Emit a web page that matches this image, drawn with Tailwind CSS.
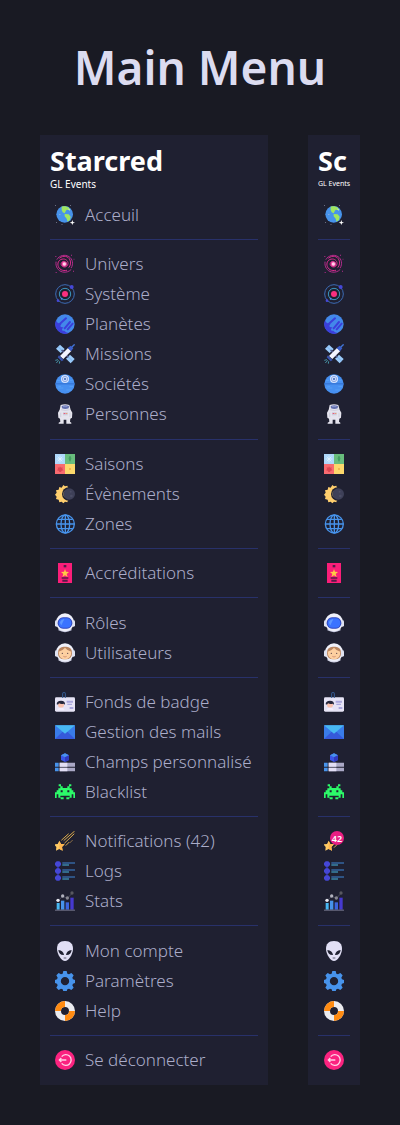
<!DOCTYPE html>
<html lang="fr">
<head>
    <meta charset="UTF-8">
    <meta name="viewport" content="width=device-width, initial-scale=1.0">
    <title>Main Menu</title>
    <script src="https://cdn.jsdelivr.net/npm/@tailwindcss/browser@4"></script>
</head>
<body class="bg-[#191a23] font-['Noto_Sans',sans-serif] text-[#abadc9]">
    <!-- Icon set, drawn on a 60x60 grid -->
    <svg class="hidden" aria-hidden="true">
        <symbol id="earth" viewBox="0 0 60 60">
            <circle cx="29" cy="28" r="25" fill="#4793eb"/>
            <path d="M20 5c7-3 17-1 23 4l-2 6-6-1-3 5-3 6-6-3-3-7z" fill="#a0e65f"/>
            <path d="M29 27l12 1 6 7-2 9-7 6-3-9-6-7z" fill="#a0e65f"/>
            <path d="M41 10l5 4-2 3-4-3z" fill="#c9f59a"/>
            <path d="M52 45l2 6 6 2-6 2-2 5-2-5-6-2 6-2z" fill="#fff"/>
            <path d="M1 1h2v2H1zM46 0h2v2h-2zM3 52h2v2H3zM20 57h2v2h-2zM13 28h3v2h-3z" fill="#b9bbd0"/>
        </symbol>
        <symbol id="galaxy" viewBox="0 0 60 60">
            <g fill="none" stroke="#d92c8e" stroke-width="3" stroke-linecap="round">
                <path d="M27 22c-8 0-11 8-7 13 5 6 15 5 18-2 4-10-4-18-13-18-11 0-18 9-16 19 2 12 14 18 26 15"/>
                <path d="M6 16C13 4 30 0 42 8c11 7 14 22 7 33" stroke="#b52c8e"/>
                <path d="M3 24c-2 14 6 27 20 30 10 2 19-1 25-7" stroke="#b52c8e"/>
                <path d="M14 12c11-9 26-6 31 6 3 8 2 16-3 22"/>
            </g>
            <circle cx="28" cy="30" r="8" fill="#f0429f"/>
            <circle cx="28" cy="30" r="5" fill="#ffd3ea"/>
            <path d="M1 6h3v3H1zM48 2h3v3h-3zM56 14h2v3h-2zM2 54h3v3H2zM54 50h3v3h-3z" fill="#b52c8e"/>
        </symbol>
        <symbol id="system" viewBox="0 0 60 60">
            <circle cx="30" cy="30" r="28" fill="none" stroke="#3c6bb4" stroke-width="3"/>
            <circle cx="30" cy="30" r="17" fill="none" stroke="#3b95bd" stroke-width="3"/>
            <circle cx="30" cy="30" r="9" fill="#fb2f7f"/>
            <circle cx="50" cy="9" r="6" fill="#4547d6"/>
            <circle cx="9" cy="50" r="4" fill="#4547d6"/>
            <circle cx="20" cy="44" r="3" fill="#4793eb"/>
        </symbol>
        <symbol id="planet" viewBox="0 0 60 60">
            <circle cx="30" cy="30" r="29" fill="#4388ea"/>
            <path d="M3 19a29 29 0 0038 38q-9-2-13-7-5 2-7-3 1-4 5-8-7 2-10-2 0-4 4-8-7 3-9-1-6-2-8-9z" fill="#3b3fdb"/>
            <path d="M14 30L33 13M29 43L45 24M38 46L53 29" stroke="#3b3fdb" stroke-width="6" stroke-linecap="round"/>
        </symbol>
        <symbol id="rocket" viewBox="0 0 60 60">
            <path d="M15 2l14 13-12 12L3 14z" fill="#9bcbfa"/>
            <path d="M45 32l14 13-12 13-14-14z" fill="#9bcbfa"/>
            <path d="M9 8l14 13M39 38l14 13" stroke="#6aa4ea" stroke-width="2"/>
            <path d="M20 18l20 22" stroke="#4f578a" stroke-width="5"/>
            <path d="M15 36L39 12l10 9-24 24z" fill="#f3f4ff"/>
            <path d="M38 12l9-7 8 8-7 9z" fill="#3b5ecb"/>
            <path d="M50 10l9-9" stroke="#4174d5" stroke-width="4"/>
            <path d="M12 34l14 14-6 4-12-12z" fill="#3a54ae"/>
            <path d="M9 47l-8 2M11 49l-7 8M14 52l-1 7" stroke="#4793a5" stroke-width="3"/>
        </symbol>
        <symbol id="station" viewBox="0 0 60 60">
            <circle cx="30" cy="30" r="29" fill="#4790f1"/>
            <path d="M1 28h58v3H1z" fill="#326fd1"/>
            <path d="M7 42h18M34 48h15M6 19h9M44 19h9M10 37h8M43 38h12" stroke="#5ba7fa" stroke-width="2"/>
            <circle cx="30" cy="15" r="12" fill="#d8e5ff"/>
            <circle cx="30" cy="15" r="8" fill="none" stroke="#6c8ed5" stroke-width="2"/>
            <path d="M30 5v20M20 15h20" stroke="#87a7e5" stroke-width="1"/>
            <circle cx="30" cy="15" r="3" fill="#4167b8"/>
        </symbol>
        <symbol id="astronaut" viewBox="0 0 60 60">
            <path d="M17 3q13-5 26 0l4 14 5 9-1 15-5 3-1 9 4 3v3H34V47h-8v12H11v-3l5-3-1-9-5-3-1-15 5-9z" fill="#e5e4ee"/>
            <path d="M20 6q11-4 22 0l-1 7q-10 4-20 0z" fill="#6470ae"/>
            <path d="M24 7h13v2H24z" fill="#9ba7dd"/>
            <path d="M18 17q13 5 26 0M17 26v13M45 26v13" fill="none" stroke="#c6c5d6" stroke-width="2"/>
            <path d="M24 25h14v9H24z" fill="#ccccdc"/>
            <path d="M26 27h5v3h-5z" fill="#ef5878"/>
            <path d="M33 27h4v3h-4z" fill="#e9a070"/>
        </symbol>
        <symbol id="seasons" viewBox="0 0 60 60">
            <path d="M0 0h30v30H0z" fill="#aed8fb"/>
            <path d="M30 0h30v30H30z" fill="#68bd7d"/>
            <path d="M0 30h30v30H0z" fill="#f86b70"/>
            <path d="M30 30h30v30H30z" fill="#fcd86c"/>
            <path d="M15 5v20M5 15h20M8 8l14 14M22 8L8 22" stroke="#e9f7ff" stroke-width="2"/>
            <path d="M45 6q7 7 0 15q-7-8 0-15zM45 17v8" fill="#45a464" stroke="#3d8b5c"/>
            <path d="M15 37l3 4 5-1-1 5 3 4-5 1-2 4h-5l-2-4-5-1 3-4-1-5 5 1z" fill="#db4652"/>
            <circle cx="45" cy="45" r="3" fill="#efad46"/>
        </symbol>
        <symbol id="eclipse" viewBox="0 0 60 60">
            <path d="M25 3l5 4 7-2 2 6 6 3v32l-6 3-2 6-7-2-5 5-5-5-7 2-2-8-8-2 2-7-5-6 5-6-2-7 8-2 2-8 7 2z" fill="#ffcf6e"/>
            <path d="M41 11a19 19 0 100 38z" fill="#ffda8b"/>
            <circle cx="41" cy="30" r="20" fill="#1f2031"/>
            <circle cx="43" cy="30" r="17" fill="#3e4058"/>
            <path d="M31 17a17 17 0 000 26 19 19 0 010-26z" fill="#ffda8b"/>
            <circle cx="47" cy="23" r="3" fill="#4b4d65"/>
            <circle cx="49" cy="36" r="4" fill="#4b4d65"/>
        </symbol>
        <symbol id="globe" viewBox="0 0 60 60">
            <g fill="none" stroke="#4793eb" stroke-width="4">
                <circle cx="31" cy="30" r="27"/>
                <ellipse cx="31" cy="30" rx="13" ry="27"/>
                <path d="M31 3v54M4 30h54M9 16h44M9 44h44"/>
            </g>
        </symbol>
        <symbol id="pass" viewBox="0 0 60 60">
            <path d="M9 0h42v60H9z" fill="#fb1e79"/>
            <path d="M26 6h8v7h-8z" fill="#551b48"/>
            <path d="M30 18l3 8 9 1-7 6 3 9-8-5-8 5 3-9-7-6 9-1z" fill="#ffcb45"/>
            <path d="M20 43h20v4H20zM22 50h16v6H22z" fill="#551b48"/>
        </symbol>
        <symbol id="helmet" viewBox="0 0 60 60">
            <path d="M12 42h36l2 10q-20 11-40 0z" fill="#c8cbe1"/>
            <ellipse cx="30" cy="28" rx="27" ry="27" fill="#eff0fa"/>
            <rect x="0" y="22" width="9" height="19" rx="4" fill="#dfe2f1"/>
            <rect x="51" y="22" width="9" height="19" rx="4" fill="#dfe2f1"/>
            <rect x="8" y="13" width="44" height="34" rx="16" fill="#3046bd"/>
            <rect x="11" y="16" width="38" height="28" rx="13" fill="#3b73ff"/>
            <path d="M15 27q3-8 13-9l-9 19q-4-4-4-10z" fill="#5e98ff"/>
        </symbol>
        <symbol id="user" viewBox="0 0 60 60">
            <path d="M12 42h36l2 10q-20 13-40 0z" fill="#d7d8e9"/>
            <circle cx="30" cy="28" r="27" fill="#eff0fa"/>
            <rect x="0" y="22" width="9" height="19" rx="4" fill="#dfe2f1"/>
            <rect x="51" y="22" width="9" height="19" rx="4" fill="#dfe2f1"/>
            <rect x="9" y="11" width="42" height="38" rx="17" fill="#b98560"/>
            <path d="M11 26q11-2 19-12 8 10 19 12 0 22-19 23-19-1-19-23z" fill="#fdcfa0"/>
            <circle cx="22" cy="31" r="2" fill="#594248"/>
            <circle cx="38" cy="31" r="2" fill="#594248"/>
            <path d="M25 40q5 4 10 0" fill="none" stroke="#c17863" stroke-width="2"/>
        </symbol>
        <symbol id="badge" viewBox="0 0 60 60">
            <rect x="0" y="16" width="60" height="43" rx="4" fill="#e6e3f5"/>
            <path d="M23 18V6q0-6 4-6t4 6v12" fill="none" stroke="#355c94" stroke-width="3"/>
            <circle cx="18" cy="38" r="9" fill="#fac1ad"/>
            <path d="M5 37q0-11 13-11 13 0 12 12l-4-3q-8 2-14-1-2 5-7 3z" fill="#25263b"/>
            <path d="M8 51q10-7 20 0v4H8z" fill="#f4efff"/>
            <path d="M35 26h19v6H35zM37 35h14v4H37zM44 45h11v6H44z" fill="#aaa7dd"/>
        </symbol>
        <symbol id="mail" viewBox="0 0 60 60">
            <path d="M0 10h60v41H0z" fill="#397ce9"/>
            <path d="M0 51l22-21h16l22 21z" fill="#3559db"/>
            <path d="M0 10h60L30 35z" fill="#48b8f3"/>
        </symbol>
        <symbol id="fields" viewBox="0 0 60 60">
            <path d="M30 4l12 6v14l-12 6-12-6V10z" fill="#3b55e7"/>
            <path d="M30 4l12 6-12 6-12-6z" fill="#4793eb"/>
            <path d="M30 16l12-6v14l-12 6z" fill="#3039be"/>
            <path d="M0 32h11v12H0zM0 47h11v11H0z" fill="#4793eb"/>
            <path d="M14 32h46v12H14zM14 47h46v11H14z" fill="#aaa8c6"/>
            <path d="M14 32h23v12H14zM14 47h23v11H14z" fill="#e2def5"/>
        </symbol>
        <symbol id="invader" viewBox="0 0 60 60">
            <path d="M11 7h7v6h5v5h14v-5h5V7h7v6h-5v6h6v6h5v6h5v17h-5V37h-5v10h-7v5H34v-6h10v-5H16v5h10v6H17v-5h-7V37H5v11H0V31h5v-6h5v-6h6v-6h-5zM17 25v6h6v-6zM37 25v6h6v-6z" fill="#2cfb69" fill-rule="evenodd"/>
        </symbol>
        <symbol id="shooting-star" viewBox="0 0 60 60">
            <g stroke="#d9a94c" stroke-width="3" stroke-linecap="round">
                <path d="M20 27L40 9M27 28L58 1M29 36L57 9M33 43l9-9"/>
                <path d="M45 35l7-7" stroke="#8e7148"/>
            </g>
            <path d="M13 29l5 10 11 1-8 8 2 11-10-5-10 5 1-11-7-8 11-1z" fill="#ffcb65"/>
            <path d="M13 29l5 10 11 1-8 8 2 11-10-5z" fill="#ffb54f"/>
        </symbol>
        <symbol id="star" viewBox="0 0 60 60">
            <path d="M30 50l18-18" stroke="#d9a94c" stroke-width="3"/>
            <path d="M14 29l5 10 11 1-8 8 2 11-10-5-10 5 1-11-7-8 11-1z" fill="#ffcb65"/>
            <path d="M14 29l5 10 11 1-8 8 2 11-10-5z" fill="#ffb54f"/>
        </symbol>
        <symbol id="logs" viewBox="0 0 60 60">
            <path d="M9 9v42" stroke="#3331aa" stroke-width="5"/>
            <g fill="#4547d6">
                <path d="M5 1h8l5 5v6l-5 5H5l-5-5V6z"/>
                <path d="M5 22h8l5 5v6l-5 5H5l-5-5v-6z"/>
                <path d="M5 43h8l5 5v6l-5 5H5l-5-5v-6z"/>
            </g>
            <path d="M22 6h38M22 27h38M22 48h38" stroke="#3f86d8" stroke-width="3"/>
            <path d="M22 12h20M22 33h20M22 54h20" stroke="#48b8e3" stroke-width="3"/>
        </symbol>
        <symbol id="stats" viewBox="0 0 60 60">
            <path d="M5 36h9v20H5z" fill="#48b8f3"/>
            <path d="M18 29h10v27H18z" fill="#4793eb"/>
            <path d="M32 34h10v22H32z" fill="#3b65df"/>
            <path d="M46 20h10v36H46z" fill="#4639cf"/>
            <path d="M0 56h60v3H0z" fill="#75778d"/>
            <path d="M9 29l14-13 14 6L51 7" fill="none" stroke="#59596c" stroke-width="2"/>
            <circle cx="9" cy="28" r="5" fill="#e7e7ef"/>
            <circle cx="23" cy="15" r="5" fill="#b1b1bd"/>
            <circle cx="37" cy="21" r="5" fill="#85858f"/>
            <circle cx="51" cy="6" r="5" fill="#58585f"/>
        </symbol>
        <symbol id="alien" viewBox="0 0 60 60">
            <path d="M30 0c17 0 24 10 24 23 0 17-14 37-24 37S6 40 6 23C6 10 13 0 30 0z" fill="#e1dff5"/>
            <path d="M10 27q15 1 17 15-15 1-17-15zM50 27q-15 1-17 15 15 1 17-15z" fill="#1f2031"/>
            <path d="M26 50h8v2h-8z" fill="#1f2031"/>
        </symbol>
        <symbol id="gear" viewBox="0 0 60 60">
            <path d="M25 0h10l2 8 5 2 7-4 7 7-4 7 2 5 7 2v9l-7 2-2 5 4 7-7 7-7-4-5 2-2 6H25l-2-6-5-2-7 4-7-7 4-7-2-5-6-2v-9l6-2 2-5-4-7 7-7 7 4 5-2zM30 18a12 12 0 100 25 12 12 0 000-25z" fill="#4793eb" fill-rule="evenodd"/>
        </symbol>
        <symbol id="lifebuoy" viewBox="0 0 60 60">
            <circle cx="30" cy="30" r="21" fill="none" stroke="#ebebef" stroke-width="18"/>
            <path d="M30 9a21 21 0 00-21 21M30 51a21 21 0 0021-21" fill="none" stroke="#ff8b12" stroke-width="18"/>
        </symbol>
        <symbol id="logout" viewBox="0 0 60 60">
            <circle cx="30" cy="30" r="30" fill="#fb2380"/>
            <g fill="none" stroke="#ffd3e5" stroke-width="4">
                <path d="M20 20a16 16 0 110 20"/>
                <path d="M34 30H12M19 24l-6 6 6 6"/>
            </g>
        </symbol>
    </svg>

    <div class="flex min-h-screen flex-col px-10 pb-10">
        <h1 class="flex h-[135px] items-center justify-center text-[46px] font-semibold text-[#dcdcf0]">Main Menu</h1>

        <div class="flex flex-1 gap-10">
            <!-- Expanded menu -->
            <aside class="flex min-w-0 flex-1 flex-col bg-[#1f2031] p-2.5">
                <header class="h-[55px] text-white">
                    <p class="text-[27px] leading-8 font-bold">Starcred</p>
                    <p class="pt-px text-[10px] leading-3">GL Events</p>
                </header>
                <nav class="flex flex-1 flex-col justify-between text-[17px] leading-[30px] font-light whitespace-nowrap" aria-label="Menu">
                    <a href="#" class="flex items-center gap-2.5 pl-[5px]"><svg class="size-5"><use href="#earth"/></svg>Acceuil</a>
                    <hr class="border-[#28316a]">
                    <div>
                        <a href="#" class="flex items-center gap-2.5 pl-[5px]"><svg class="size-5"><use href="#galaxy"/></svg>Univers</a>
                        <a href="#" class="flex items-center gap-2.5 pl-[5px]"><svg class="size-5"><use href="#system"/></svg>Système</a>
                        <a href="#" class="flex items-center gap-2.5 pl-[5px]"><svg class="size-5"><use href="#planet"/></svg>Planètes</a>
                        <a href="#" class="flex items-center gap-2.5 pl-[5px]"><svg class="size-5"><use href="#rocket"/></svg>Missions</a>
                        <a href="#" class="flex items-center gap-2.5 pl-[5px]"><svg class="size-5"><use href="#station"/></svg>Sociétés</a>
                        <a href="#" class="flex items-center gap-2.5 pl-[5px]"><svg class="size-5"><use href="#astronaut"/></svg>Personnes</a>
                    </div>
                    <hr class="border-[#28316a]">
                    <div>
                        <a href="#" class="flex items-center gap-2.5 pl-[5px]"><svg class="size-5"><use href="#seasons"/></svg>Saisons</a>
                        <a href="#" class="flex items-center gap-2.5 pl-[5px]"><svg class="size-5"><use href="#eclipse"/></svg>Évènements</a>
                        <a href="#" class="flex items-center gap-2.5 pl-[5px]"><svg class="size-5"><use href="#globe"/></svg>Zones</a>
                    </div>
                    <hr class="border-[#28316a]">
                    <a href="#" class="flex items-center gap-2.5 pl-[5px]"><svg class="size-5"><use href="#pass"/></svg>Accréditations</a>
                    <hr class="border-[#28316a]">
                    <div>
                        <a href="#" class="flex items-center gap-2.5 pl-[5px]"><svg class="size-5"><use href="#helmet"/></svg>Rôles</a>
                        <a href="#" class="flex items-center gap-2.5 pl-[5px]"><svg class="size-5"><use href="#user"/></svg>Utilisateurs</a>
                    </div>
                    <hr class="border-[#28316a]">
                    <div>
                        <a href="#" class="flex items-center gap-2.5 pl-[5px]"><svg class="size-5"><use href="#badge"/></svg>Fonds de badge</a>
                        <a href="#" class="flex items-center gap-2.5 pl-[5px]"><svg class="size-5"><use href="#mail"/></svg>Gestion des mails</a>
                        <a href="#" class="flex items-center gap-2.5 pl-[5px]"><svg class="size-5"><use href="#fields"/></svg>Champs personnalisé</a>
                        <a href="#" class="flex items-center gap-2.5 pl-[5px]"><svg class="size-5"><use href="#invader"/></svg>Blacklist</a>
                    </div>
                    <hr class="border-[#28316a]">
                    <div>
                        <a href="#" class="flex items-center gap-2.5 pl-[5px]"><svg class="size-5"><use href="#shooting-star"/></svg>Notifications (42)</a>
                        <a href="#" class="flex items-center gap-2.5 pl-[5px]"><svg class="size-5"><use href="#logs"/></svg>Logs</a>
                        <a href="#" class="flex items-center gap-2.5 pl-[5px]"><svg class="size-5"><use href="#stats"/></svg>Stats</a>
                    </div>
                    <hr class="border-[#28316a]">
                    <div>
                        <a href="#" class="flex items-center gap-2.5 pl-[5px]"><svg class="size-5"><use href="#alien"/></svg>Mon compte</a>
                        <a href="#" class="flex items-center gap-2.5 pl-[5px]"><svg class="size-5"><use href="#gear"/></svg>Paramètres</a>
                        <a href="#" class="flex items-center gap-2.5 pl-[5px]"><svg class="size-5"><use href="#lifebuoy"/></svg>Help</a>
                    </div>
                    <hr class="border-[#28316a]">
                    <a href="#" class="flex items-center gap-2.5 pl-[5px]"><svg class="size-5"><use href="#logout"/></svg>Se déconnecter</a>
                </nav>
            </aside>

            <!-- Collapsed menu -->
            <aside class="flex w-13 flex-col bg-[#1f2031] p-2.5">
                <header class="h-[55px] whitespace-nowrap text-white">
                    <p class="text-[27px] leading-8 font-bold">Sc</p>
                    <p class="pt-px text-[7px] leading-3">GL Events</p>
                </header>
                <nav class="flex flex-1 flex-col justify-between" aria-label="Menu réduit">
                    <a href="#" aria-label="Acceuil" class="flex h-[30px] items-center justify-center"><svg class="size-5"><use href="#earth"/></svg></a>
                    <hr class="border-[#28316a]">
                    <div>
                        <a href="#" aria-label="Univers" class="flex h-[30px] items-center justify-center"><svg class="size-5"><use href="#galaxy"/></svg></a>
                        <a href="#" aria-label="Système" class="flex h-[30px] items-center justify-center"><svg class="size-5"><use href="#system"/></svg></a>
                        <a href="#" aria-label="Planètes" class="flex h-[30px] items-center justify-center"><svg class="size-5"><use href="#planet"/></svg></a>
                        <a href="#" aria-label="Missions" class="flex h-[30px] items-center justify-center"><svg class="size-5"><use href="#rocket"/></svg></a>
                        <a href="#" aria-label="Sociétés" class="flex h-[30px] items-center justify-center"><svg class="size-5"><use href="#station"/></svg></a>
                        <a href="#" aria-label="Personnes" class="flex h-[30px] items-center justify-center"><svg class="size-5"><use href="#astronaut"/></svg></a>
                    </div>
                    <hr class="border-[#28316a]">
                    <div>
                        <a href="#" aria-label="Saisons" class="flex h-[30px] items-center justify-center"><svg class="size-5"><use href="#seasons"/></svg></a>
                        <a href="#" aria-label="Évènements" class="flex h-[30px] items-center justify-center"><svg class="size-5"><use href="#eclipse"/></svg></a>
                        <a href="#" aria-label="Zones" class="flex h-[30px] items-center justify-center"><svg class="size-5"><use href="#globe"/></svg></a>
                    </div>
                    <hr class="border-[#28316a]">
                    <a href="#" aria-label="Accréditations" class="flex h-[30px] items-center justify-center"><svg class="size-5"><use href="#pass"/></svg></a>
                    <hr class="border-[#28316a]">
                    <div>
                        <a href="#" aria-label="Rôles" class="flex h-[30px] items-center justify-center"><svg class="size-5"><use href="#helmet"/></svg></a>
                        <a href="#" aria-label="Utilisateurs" class="flex h-[30px] items-center justify-center"><svg class="size-5"><use href="#user"/></svg></a>
                    </div>
                    <hr class="border-[#28316a]">
                    <div>
                        <a href="#" aria-label="Fonds de badge" class="flex h-[30px] items-center justify-center"><svg class="size-5"><use href="#badge"/></svg></a>
                        <a href="#" aria-label="Gestion des mails" class="flex h-[30px] items-center justify-center"><svg class="size-5"><use href="#mail"/></svg></a>
                        <a href="#" aria-label="Champs personnalisé" class="flex h-[30px] items-center justify-center"><svg class="size-5"><use href="#fields"/></svg></a>
                        <a href="#" aria-label="Blacklist" class="flex h-[30px] items-center justify-center"><svg class="size-5"><use href="#invader"/></svg></a>
                    </div>
                    <hr class="border-[#28316a]">
                    <div>
                        <a href="#" aria-label="Notifications (42)" class="relative flex h-[30px] items-center justify-center">
                            <svg class="size-5"><use href="#star"/></svg>
                            <span class="absolute top-[5px] right-1.5 flex size-3.5 items-center justify-center rounded-full bg-[#e91e83] text-[9px] font-semibold text-white">42</span>
                        </a>
                        <a href="#" aria-label="Logs" class="flex h-[30px] items-center justify-center"><svg class="size-5"><use href="#logs"/></svg></a>
                        <a href="#" aria-label="Stats" class="flex h-[30px] items-center justify-center"><svg class="size-5"><use href="#stats"/></svg></a>
                    </div>
                    <hr class="border-[#28316a]">
                    <div>
                        <a href="#" aria-label="Mon compte" class="flex h-[30px] items-center justify-center"><svg class="size-5"><use href="#alien"/></svg></a>
                        <a href="#" aria-label="Paramètres" class="flex h-[30px] items-center justify-center"><svg class="size-5"><use href="#gear"/></svg></a>
                        <a href="#" aria-label="Help" class="flex h-[30px] items-center justify-center"><svg class="size-5"><use href="#lifebuoy"/></svg></a>
                    </div>
                    <hr class="border-[#28316a]">
                    <a href="#" aria-label="Se déconnecter" class="flex h-[30px] items-center justify-center"><svg class="size-5"><use href="#logout"/></svg></a>
                </nav>
            </aside>
        </div>
    </div>
</body>
</html>
